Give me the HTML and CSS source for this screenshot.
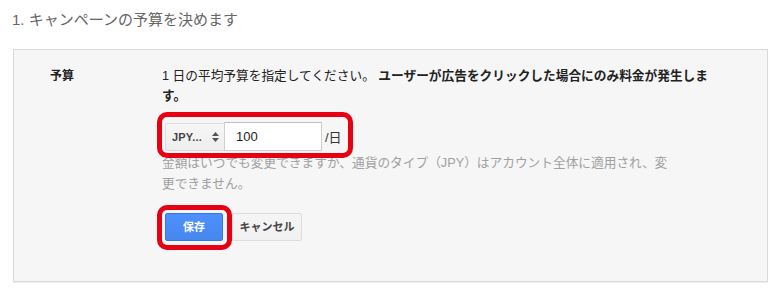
FILE: index.html
```html
<!DOCTYPE html>
<html lang="ja">
<head>
<meta charset="utf-8">
<title>予算</title>
<link rel="stylesheet" href="styles.css">
</head>
<body>
<h2 class="step-title">1. キャンペーンの予算を決めます</h2>
<section class="panel">
  <div class="field-label">予算</div>
  <div class="field-body">
    <p class="desc">1 日の平均予算を指定してください。 <strong>ユーザーが広告をクリックした場合にのみ料金が発生します。</strong></p>
    <div class="amount-row">
      <div class="currency-select">
        <span class="currency-text">JPY...</span>
        <svg class="updown" width="7" height="10" viewBox="0 0 7 10"><path d="M3.5 0 L7 4 L0 4 Z" fill="#555"/><path d="M0 6 L7 6 L3.5 10 Z" fill="#555"/></svg>
      </div>
      <div class="amount-input">100</div>
      <span class="per-day">/日</span>
      <span class="mark mark-input"></span>
    </div>
    <p class="help">金額はいつでも変更できますか、通貨のタイプ（JPY）はアカウント全体に適用され、変更できません。</p>
    <div class="actions">
      <div class="save-wrap">
        <button class="btn btn-save">保存</button>
        <span class="mark mark-save"></span>
      </div>
      <button class="btn btn-cancel">キャンセル</button>
    </div>
  </div>
</section>
</body>
</html>
```

FILE: styles.css
```css
* { box-sizing: border-box; }
html, body { margin: 0; padding: 0; background: #fff; }
body {
  font-family: "Liberation Sans", "Noto Sans CJK JP", sans-serif;
  color: #222;
  width: 778px;
  height: 298px;
  overflow: hidden;
}
.step-title {
  margin: 0;
  padding: 10px 0 0 12px;
  font-size: 15px;
  line-height: 20px;
  font-weight: normal;
  color: #666;
}
.panel {
  margin: 19px 0 0 13px;
  width: 755px;
  background: #f6f6f6;
  border: 1px solid #d9d9d9;
  box-shadow: 0 1px 1px rgba(0,0,0,0.06);
  padding: 16px 0 40px 36px;
  display: grid;
  grid-template-columns: 112px 560px;
}
.field-label {
  font-size: 12px;
  line-height: 20px;
  font-weight: bold;
  color: #222;
}
.field-body { font-size: 12.7px; }
.desc {
  margin: 0;
  line-height: 20px;
  color: #222;
}
.desc strong { font-weight: bold; }
.amount-row {
  position: relative;
  margin: 16px 0 0 3px;
  display: inline-flex;
  align-items: center;
  height: 29px;
}
.currency-select {
  width: 60px;
  height: 28px;
  margin-top: 1px;
  border: 1px solid #dcdcdc;
  border-radius: 2px 0 0 2px;
  background: linear-gradient(#f6f6f6, #eeeeee);
  display: flex;
  align-items: center;
  padding-left: 6px;
  gap: 10px;
}
.currency-text {
  font-size: 11px;
  font-weight: bold;
  color: #444;
  letter-spacing: 0.2px;
}
.updown { display: block; }
.amount-input {
  width: 98px;
  height: 29px;
  margin-left: -1px;
  border: 1px solid #cfcfcf;
  border-top-color: #c0c0c0;
  background: #fff;
  font-size: 13px;
  line-height: 27px;
  padding-left: 11px;
  color: #222;
}
.per-day {
  margin-left: 3px;
  font-size: 13px;
  color: #333;
}
.mark {
  position: absolute;
  border: 5px solid #e60012;
  border-radius: 10px;
  pointer-events: none;
}
.mark-input {
  left: -8px;
  top: -10px;
  width: 196px;
  height: 46px;
}
.help {
  margin: 1.5px 0 0;
  width: 514px;
  line-height: 21px;
  color: #a0a0a0;
}
.actions {
  margin: 18.5px 0 0 3px;
  display: flex;
  align-items: center;
  gap: 9px;
}
.save-wrap { position: relative; display: flex; }
.mark-save {
  left: -8px;
  top: -8px;
  width: 75px;
  height: 45px;
}
.btn {
  font-family: "Liberation Sans", "Noto Sans CJK JP", sans-serif;
  font-size: 11px;
  font-weight: bold;
  height: 28px;
  border-radius: 2px;
  padding: 0;
  margin: 0;
  line-height: 26px;
}
.btn-save {
  width: 58px;
  background: linear-gradient(#4d90fe, #4787ed);
  border: 1px solid #3079ed;
  color: #fff;
}
.btn-cancel {
  width: 70px;
  background: linear-gradient(#f5f5f5, #f1f1f1);
  border: 1px solid #dcdcdc;
  color: #444;
}
```
